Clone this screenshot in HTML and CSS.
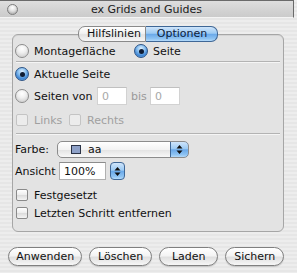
FILE: index.html
```html
<!DOCTYPE html>
<html>
<head>
<meta charset="utf-8">
<link rel="stylesheet" href="styles.css">
</head>
<body>
<div class="window">
  <div class="titlebar">
    <div class="tb-left"><span class="close"></span></div>
    <div class="title">ex Grids and Guides</div>
    <div></div>
  </div>
  <div class="content">
    <div class="tabs">
      <div class="tab">Hilfslinien</div>
      <div class="tab sel">Optionen</div>
    </div>
    <div class="box">
      <div class="row r1">
        <label class="item w1"><span class="radio"></span>Montagefläche</label>
        <label class="item"><span class="radio on"></span>Seite</label>
      </div>
      <div class="sep s1"></div>
      <div class="row r2">
        <label class="item"><span class="radio on"></span>Aktuelle Seite</label>
      </div>
      <div class="row r3">
        <label class="item w2"><span class="radio"></span>Seiten von</label>
        <span class="field dis">0</span>
        <span class="bis">bis</span>
        <span class="field dis">0</span>
      </div>
      <div class="row r4">
        <label class="item w3 disabled"><span class="check dis"></span>Links</label>
        <label class="item disabled"><span class="check dis"></span>Rechts</label>
      </div>
      <div class="sep s2"></div>
      <div class="row r5">
        <span class="lbl l1">Farbe:</span>
        <div class="popup">
          <span class="swatch"></span><span class="ptext">aa</span>
          <span class="parrows"><svg width="7" height="11" viewBox="0 0 7 11"><path d="M3.5 1 L6.5 4.5 L0.5 4.5 Z M3.5 10 L6.5 6.5 L0.5 6.5 Z" fill="#111"/></svg></span>
        </div>
      </div>
      <div class="row r6">
        <span class="lbl l2">Ansicht</span>
        <span class="field big">100%</span>
        <span class="stepper"><svg width="7" height="11" viewBox="0 0 7 11"><path d="M3.5 1 L6.5 4.5 L0.5 4.5 Z M3.5 10 L6.5 6.5 L0.5 6.5 Z" fill="#111"/></svg></span>
      </div>
      <div class="row r7">
        <label class="item"><span class="check"></span>Festgesetzt</label>
      </div>
      <div class="row r8">
        <label class="item"><span class="check"></span>Letzten Schritt entfernen</label>
      </div>
    </div>
    <div class="buttons">
      <button class="btn b1">Anwenden</button>
      <button class="btn b2">Löschen</button>
      <button class="btn b3">Laden</button>
      <button class="btn b4">Sichern</button>
    </div>
  </div>
</div>
</body>
</html>
```
FILE: styles.css
```css
* { box-sizing: border-box; }
html, body { margin: 0; padding: 0; }
body {
  width: 297px; height: 273px; overflow: hidden;
  font-family: "DejaVu Sans", "Liberation Sans", sans-serif;
  font-size: 11px; color: #111;
  background: #ececec;
}
.window {
  height: 273px;
  background: repeating-linear-gradient(to bottom, #ededed 0, #ededed 2px, #e6e6e6 2px, #e6e6e6 4px);
}
.titlebar {
  height: 18px;
  margin-right: 3px;
  border-top: 1px solid #6a6a6a;
  border-right: 1px solid #6a6a6a;
  border-bottom: 1px solid #f4f4f4;
  background: linear-gradient(#dedede, #d2d2d2 60%, #cbcbcb);
  display: grid;
  grid-template-columns: 1fr auto 1fr;
  align-items: center;
}
.tb-left { display: flex; align-items: center; }
.close {
  width: 11px; height: 11px; margin-left: 7px;
  border-radius: 50%;
  border: 1px solid #7d7d7d;
  background: radial-gradient(circle at 50% 30%, #ffffff 0, #e0e0e0 45%, #b8b8b8 75%, #d8d8d8 100%);
}
.title { color: #1a1a1a; font-size: 11px; padding-top: 1px; }
.content { padding: 0 13px 0 12px; }
.tabs {
  display: flex; justify-content: center;
  margin-top: 8px; margin-bottom: -8px;
  position: relative; z-index: 1;
}
.tab {
  height: 16px; line-height: 14px;
  padding: 0 7px 0 8px;
  border: 1px solid #8a8a8a;
  border-radius: 7px 0 0 7px;
  background: linear-gradient(#ffffff, #f2f2f2 45%, #e2e2e2 55%, #f6f6f6);
  color: #111;
  width: 68px; text-align: center;
}
.tab.sel {
  width: 72px;
  border: 1px solid #3f6796;
  border-left: none;
  border-radius: 0 7px 7px 0;
  background: linear-gradient(#cfe5fb, #9ccaf3 45%, #6aa9e9 52%, #8fc4f3 85%, #b6dbfa);
  color: #0d213b;
}
.box {
  height: 198px;
  border: 1px solid #a6a6a6;
  border-radius: 6px;
  background: #e3e3e3;
  padding: 8px 2px 0 2px;
  box-shadow: inset 0 1px 0 #d4d4d4;
}
.row { display: flex; align-items: center; }
.item { display: flex; align-items: center; gap: 5px; height: 16px; }
.w1 { width: 119px; }
.w2 { width: 82px; }
.w3 { width: 53px; }
.disabled { color: #a0a0a0; }
.radio {
  width: 14px; height: 14px; border-radius: 50%;
  border: 1px solid #8c8c8c;
  background: radial-gradient(circle at 50% 30%, #ffffff 0, #f0f0f0 40%, #d6d6d6 75%, #f2f2f2 100%);
  display: flex; align-items: center; justify-content: center;
  flex: none;
}
.radio.on {
  border-color: #2d5486;
  background: radial-gradient(circle at 50% 30%, #e2f0fd 0, #8ec3f1 35%, #3f86d4 70%, #8ec5f4 100%);
}
.radio.on::after {
  content: ""; width: 5px; height: 5px; border-radius: 50%;
  background: #0f1c33;
}
.check {
  width: 12px; height: 12px; margin: 0 1px;
  border: 1px solid #8a8a8a; border-radius: 2px;
  background: linear-gradient(#ffffff, #ececec 50%, #dcdcdc 55%, #f4f4f4);
  flex: none;
}
.check.dis { border-color: #c4c4c4; background: #ececec; }
.sep {
  height: 2px; margin: 0 1px;
  border-top: 1px solid #b3b3b3; border-bottom: 1px solid #f5f5f5;
}
.s1 { margin-top: 2px; }
.r1 { height: 16px; }
.r2 { height: 16px; margin-top: 3px; }
.r3 { height: 20px; margin-top: 4px; }
.r4 { height: 16px; margin-top: 6px; }
.s2 { margin-top: 5px; }
.r5 { height: 18px; margin-top: 5px; }
.r6 { height: 18px; margin-top: 4px; }
.r7 { height: 16px; margin-top: 7px; }
.r8 { height: 16px; margin-top: 2px; }
.field {
  display: flex; align-items: center;
  width: 30px; height: 18px; padding-left: 4px;
  background: #fff;
  border: 1px solid #b0b0b0; border-top-color: #8c8c8c;
}
.field.dis { color: #a8a8a8; border-color: #d2d2d2; border-top-color: #c0c0c0; }
.bis { color: #9a9a9a; width: 23px; padding-left: 4px; }
.lbl { flex: none; }
.l1 { width: 42px; }
.l2 { width: 44px; }
.popup {
  width: 132px; height: 17px;
  display: flex; align-items: center;
  border: 1px solid #8c8c8c; border-radius: 5px;
  background: linear-gradient(#ffffff, #f3f3f3 50%, #e4e4e4 55%, #f8f8f8);
  padding-left: 13px; overflow: hidden;
}
.swatch {
  width: 10px; height: 9px; flex: none;
  background: #8ea1c8; border: 1px solid #2b3346;
}
.ptext { margin-left: 7px; flex: 1; }
.parrows {
  width: 19px; height: 17px; margin-top: -1px; margin-bottom: -1px; margin-right: -1px;
  display: flex; align-items: center; justify-content: center;
  border: 1px solid #3f6796; border-radius: 0 5px 5px 0;
  background: linear-gradient(#cfe5fb, #9ccaf3 45%, #6aa9e9 52%, #8fc4f3 85%, #b6dbfa);
}
.field.big { width: 47px; height: 18px; }
.stepper {
  width: 15px; height: 18px; margin-left: 4px;
  display: flex; align-items: center; justify-content: center;
  border: 1px solid #3f6796; border-radius: 4px;
  background: linear-gradient(#cfe5fb, #9ccaf3 45%, #6aa9e9 52%, #8fc4f3 85%, #b6dbfa);
}
.buttons {
  display: flex; gap: 7px;
  margin-top: 15px; margin-left: -4px;
}
.btn {
  height: 19px; padding: 0;
  font-family: inherit; font-size: 11px; color: #111;
  border: 1px solid #7f7f7f; border-radius: 10px;
  background: linear-gradient(#ffffff, #f4f4f4 45%, #e0e0e0 55%, #f6f6f6);
  box-shadow: 0 1px 1px rgba(0,0,0,0.15);
}
.b1 { width: 75px; }
.b2 { width: 63px; }
.b3 { width: 60px; }
.b4 { width: 59px; }
```
